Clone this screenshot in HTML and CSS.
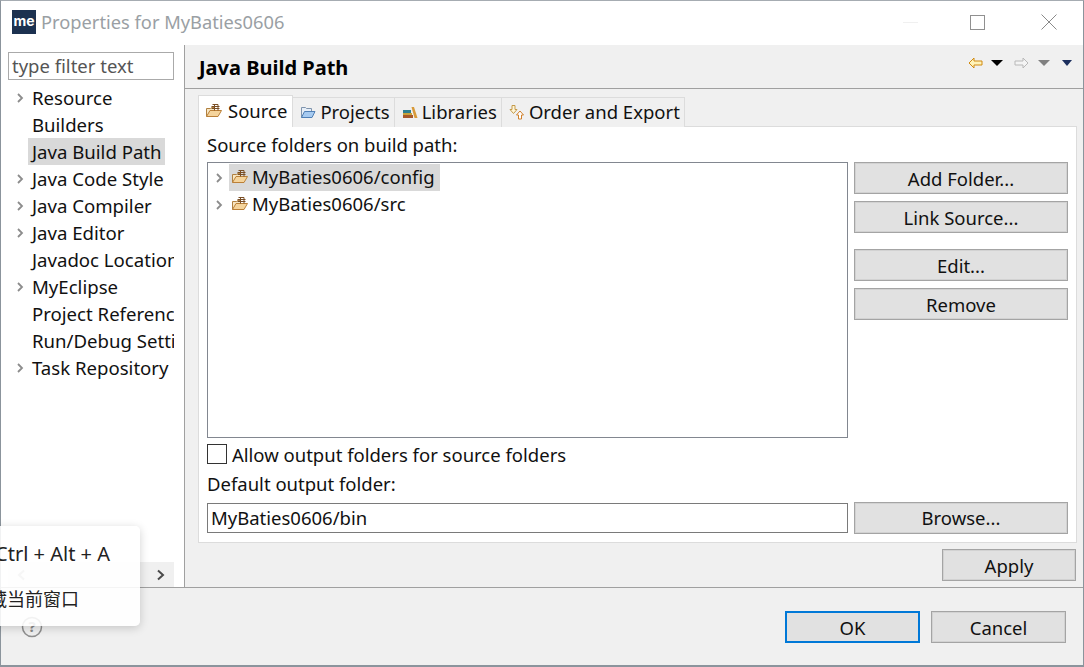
FILE: index.html
```html
<!DOCTYPE html>
<html lang="en">
<head>
<meta charset="utf-8">
<title>Properties for MyBaties0606</title>
<link rel="stylesheet" href="styles.css">
</head>
<body>
<svg class="defs" width="0" height="0" aria-hidden="true">
  <symbol id="pkg" viewBox="0 0 16 16">
    <path d="M0.500 13.500V5.500h4l1-1h3v3" fill="#f8e6c2" stroke="#b08040"/>
    <path d="M0.500 13.500l3.500-6h11.500l-3.500 6z" fill="#f5d49c" stroke="#bb8038"/>
    <path d="M6.500 1.500h5.500v6M5.500 3.500h8M5.500 5.500h8M8.500 1.500v6" fill="none" stroke="#7a4f26"/>
  </symbol>
  <symbol id="chev" viewBox="0 0 8 10">
    <path d="M2 1l4 4-4 4" fill="none" stroke="#8c8c8c" stroke-width="1.800"/>
  </symbol>
</svg>
<div class="window">
  <header class="titlebar">
    <div class="logo">me</div>
    <div class="title">Properties for MyBaties0606</div>
    <div class="winctl">
      <span class="min"></span>
      <span class="max"></span>
      <svg class="close" width="16" height="16" viewBox="0 0 16 16"><path d="M0.500 0.500l15 15M15.500 0.500l-15 15" stroke="#8a8a8a" fill="none"/></svg>
    </div>
  </header>
  <main class="main">
    <aside class="sidebar">
      <input class="filter" value="type filter text" aria-label="filter">
      <ul class="nav">
        <li class="item"><svg class="arrow"><use href="#chev"/></svg><span>Resource</span></li>
        <li class="item"><span>Builders</span></li>
        <li class="item"><span class="sel">Java Build Path</span></li>
        <li class="item"><svg class="arrow"><use href="#chev"/></svg><span>Java Code Style</span></li>
        <li class="item"><svg class="arrow"><use href="#chev"/></svg><span>Java Compiler</span></li>
        <li class="item"><svg class="arrow"><use href="#chev"/></svg><span>Java Editor</span></li>
        <li class="item"><span>Javadoc Location</span></li>
        <li class="item"><svg class="arrow"><use href="#chev"/></svg><span>MyEclipse</span></li>
        <li class="item"><span>Project References</span></li>
        <li class="item"><span>Run/Debug Settings</span></li>
        <li class="item"><svg class="arrow"><use href="#chev"/></svg><span>Task Repository</span></li>
      </ul>
      <div class="hscroll">
        <span class="sb-l"><svg width="12" height="12" viewBox="0 0 12 12"><path d="M9 1.500L4 6l5 4.500" fill="none" stroke="#b0b0b0" stroke-width="2"/></svg></span>
        <span class="sb-thumb"></span>
        <span class="sb-r"><svg width="12" height="12" viewBox="0 0 12 12"><path d="M3 1.500l5 4.500-5 4.500" fill="none" stroke="#4a4a4a" stroke-width="2"/></svg></span>
      </div>
    </aside>
    <section class="content">
      <div class="head">
        <h1>Java Build Path</h1>
        <div class="navtools">
          <svg width="15" height="12" viewBox="0 0 15 12"><path d="M1 6l5-5v3h8v4H6v3z" fill="#fff3b8" stroke="#d08a10"/></svg>
          <i class="tri black"></i>
          <svg class="next" width="15" height="12" viewBox="0 0 15 12"><path d="M14 6L9 1v3H1v4h8v3z" fill="#f4f4f4" stroke="#b8b8b8"/></svg>
          <i class="tri gray"></i>
          <i class="tri navy"></i>
        </div>
      </div>
      <div class="body">
        <div class="tabs">
          <div class="tab active">
            <svg class="ico"><use href="#pkg"/></svg>Source
          </div>
          <div class="tab">
            <svg class="ico" viewBox="0 0 16 16"><path d="M1.500 13.500V3.500h4l1 1h5v3" fill="#e6eef7" stroke="#7f94ad"/><path d="M1.500 13.500l3-6h10.500l-3 6z" fill="#a6caf0" stroke="#4f7fb5"/></svg>Projects
          </div>
          <div class="tab">
            <svg class="ico" viewBox="0 0 16 16"><path d="M1 6h8v3H1z" fill="#2f7f8f"/><path d="M1 9h9v2H1z" fill="#c9a23a"/><path d="M1 11h10v3H1z" fill="#a8582a"/><path d="M9.500 3h2.500l3.500 11h-3z" fill="#d89a3a"/></svg>Libraries
          </div>
          <div class="tab">
            <svg class="ico" viewBox="0 0 16 16"><path d="M3 1.500h3v4h2l-3.500 4-3.500-4h2z" fill="#fff6d8" stroke="#c49a4a"/><path d="M11 7l3.500 4h-2v4h-3v-4h-2z" fill="#fff" stroke="#d0802a"/></svg>Order and Export
          </div>
        </div>
        <div class="panel">
          <div class="label">Source folders on build path:</div>
          <div class="srcrow">
            <div class="tree">
              <div class="trow"><svg class="arrow"><use href="#chev"/></svg><span class="tsel"><svg class="ico"><use href="#pkg"/></svg>MyBaties0606/config</span></div>
              <div class="trow"><svg class="arrow"><use href="#chev"/></svg><span class="tplain"><svg class="ico"><use href="#pkg"/></svg>MyBaties0606/src</span></div>
            </div>
            <div class="btncol">
              <button class="btn">Add Folder...</button>
              <button class="btn">Link Source...</button>
              <button class="btn gap">Edit...</button>
              <button class="btn">Remove</button>
            </div>
          </div>
          <label class="check"><span class="box"></span>Allow output folders for source folders</label>
          <div class="label out">Default output folder:</div>
          <div class="outrow">
            <input class="path" value="MyBaties0606/bin" aria-label="output">
            <button class="btn browse">Browse...</button>
          </div>
        </div>
        <div class="applyrow"><button class="btn apply">Apply</button></div>
      </div>
    </section>
  </main>
  <footer class="footer">
    <svg class="help" width="22" height="22" viewBox="0 0 22 22"><circle cx="11" cy="11" r="9.500" fill="none" stroke="#8f8f8f" stroke-width="1.500"/><text x="11" y="16" text-anchor="middle" class="qm">?</text></svg>
    <div class="actions">
      <button class="btn dlg default">OK</button>
      <button class="btn dlg">Cancel</button>
    </div>
  </footer>
</div>
<div class="popup">
  <div class="pline a">Ctrl + Alt + A</div>
  <div class="pline b">隐藏当前窗口</div>
</div>
</body>
</html>
```
FILE: styles.css
```css
* { box-sizing: border-box; }
html, body { margin: 0; padding: 0; height: 100%; overflow: hidden; background: #fff; }
body { font-family: "Noto Sans", "Noto Sans CJK SC", sans-serif; font-size: 18.500px; color: #111; }
.defs { position: absolute; }
.window { width: 1084px; height: 667px; display: flex; flex-direction: column; border: 1px solid #8b949c; border-bottom-width: 2px; border-top-color: #a6acb2; background: #f0f0f0; }
.titlebar { height: 44px; flex: none; background: #fff; display: flex; align-items: center; padding: 0 0 2px 11px; }
.logo { width: 24px; height: 24px; background: #1c3150; color: #fff; font: bold 14px/22px "Inter", sans-serif; text-align: center; }
.title { margin-left: 5px; padding-bottom: 2px; color: #9a9fa4; font-size: 18.300px; }
.winctl { margin-left: auto; display: flex; align-items: center; }
.min { width: 15px; height: 1px; background: #f0f0f0; margin-right: 52px; }
.max { width: 15px; height: 15px; border: 1px solid #909090; margin-right: 56px; }
.close { margin-right: 26px; display: block; }
.main { flex: 1; display: flex; min-height: 0; }
.sidebar { width: 184px; flex: none; background: #fff; border-right: 1px solid #a0a0a0; padding: 7px 9px 0 7px; display: flex; flex-direction: column; }
.filter { width: 166px; height: 28px; border: 1px solid #aaa; padding: 0 3px 2px; font: inherit; color: #555; outline: none; background: #fff; flex: none; }
.nav { list-style: none; margin: 4px 0 1px; padding: 0; width: 166px; overflow: hidden; flex: 1; font-size: 18.600px; }
.item { height: 27px; line-height: 27px; padding-left: 24px; position: relative; white-space: nowrap; }
.item .arrow { position: absolute; left: 8px; top: 9px; }
.arrow { width: 8px; height: 10px; flex: none; }
.sel { display: inline-block; background: #d9d9d9; margin-left: -4px; padding: 0 3px 0 4px; }
.hscroll { height: 25px; flex: none; width: 166px; background: #f0f0f0; display: flex; align-items: center; }
.sb-l { width: 26px; display: flex; justify-content: center; }
.sb-thumb { width: 94px; height: 25px; background: #f6f6f6; }
.sb-r { margin-left: auto; width: 26px; display: flex; justify-content: center; }
.content { flex: 1; min-width: 0; display: flex; flex-direction: column; }
.head { height: 44px; flex: none; border-bottom: 1px solid #a0a0a0; display: flex; padding-left: 14px; justify-content: space-between; }
.head h1 { margin: 0; font-size: 20px; font-weight: 700; line-height: 46px; color: #000; }
.navtools { display: flex; align-items: center; height: 36px; padding-right: 11px; }
.navtools .next { margin-left: 10px; }
.tri { display: block; width: 0; height: 0; border-left: 6px solid transparent; border-right: 6px solid transparent; border-top: 6px solid #000; margin-left: 8px; }
.tri.black { margin-right: 1px; }
.tri.gray { border-top-color: #808080; margin-left: 9px; }
.tri.navy { border-left-width: 5px; border-right-width: 5px; border-top-color: #1c2f5e; margin-left: 12px; }
.body { flex: 1; min-height: 0; padding: 6px 7px 0 13px; display: flex; flex-direction: column; }
.tabs { display: flex; align-items: flex-start; height: 32px; flex: none; position: relative; z-index: 1; }
.tab { height: 30px; margin-top: 2px; background: #f0f0f0; border: 1px solid #dcdcdc; border-left: 0; border-bottom: 0; padding: 0 4px 2px 7px; display: flex; align-items: center; gap: 4px; line-height: 28px; white-space: nowrap; }
.tab.active { background: #fff; height: 32px; margin-top: 0; border-left: 1px solid #dcdcdc; padding: 0 5px 1px 7px; gap: 6px; }
.ico { width: 16px; height: 16px; flex: none; display: block; }
.panel { background: #fff; border: 1px solid #dcdcdc; height: 417px; flex: none; padding: 7px 7px 0 8px; margin-top: -1px; width: 879px; }
.label { height: 28px; line-height: 22px; }
.srcrow { display: flex; gap: 6px; height: 276px; }
.tree { width: 641px; flex: none; border: 1px solid #828790; background: #fff; padding: 1px 0 0 7px; }
.trow { height: 27px; display: flex; align-items: center; }
.tsel, .tplain { display: flex; align-items: center; gap: 4px; height: 27px; margin-left: 6px; padding: 0 5px 2px 3px; }
.tsel { background: #d9d9d9; }
.btncol { width: 214px; flex: none; display: flex; flex-direction: column; gap: 7px; }
.btn { height: 32px; width: 214px; flex: none; background: #e1e1e1; border: 1px solid #a4a4a4; box-shadow: inset 0 0 0 1px #d2d2d2; font: inherit; color: #111; padding: 0; }
.btn.gap { margin-top: 9px; }
.btn.browse { padding-bottom: 2px; }
.check { display: flex; align-items: center; gap: 5px; height: 20px; margin-top: 6px; }
.box { width: 20px; height: 20px; border: 1px solid #333; background: #fff; flex: none; }
.label.out { margin-top: 9px; height: 28px; line-height: 22px; }
.outrow { display: flex; gap: 6px; align-items: center; height: 32px; margin-top: 1px; }
.path { width: 641px; height: 30px; flex: none; border: 1px solid #7a7a7a; font: inherit; color: #111; padding: 0 3px 2px; outline: none; }
.applyrow { display: flex; justify-content: flex-end; padding-top: 6px; }
.apply { width: 134px; }
.footer { height: 78px; flex: none; border-top: 1px solid #a0a0a0; display: flex; justify-content: space-between; align-items: flex-start; padding: 23px 17px 0 20px; }
.help { margin-top: 5px; }
.qm { font: bold 15px "Noto Sans", sans-serif; fill: #8a8a8a; }
.actions { display: flex; gap: 11px; }
.btn.dlg { width: 135px; }
.btn.default { border: 2px solid #0078d7; box-shadow: none; }
.popup { position: absolute; left: -60px; top: 526px; width: 200px; height: 100px; background: rgba(255,255,255,.88); border-radius: 5px; box-shadow: 0 2px 10px rgba(0,0,0,.18); color: #222; }
.pline { position: absolute; white-space: nowrap; }
.pline.a { right: 30px; top: 14px; font-size: 20px; }
.pline.b { right: 61px; top: 59px; font-size: 18px; font-family: "Noto Sans CJK SC", sans-serif; }
```
